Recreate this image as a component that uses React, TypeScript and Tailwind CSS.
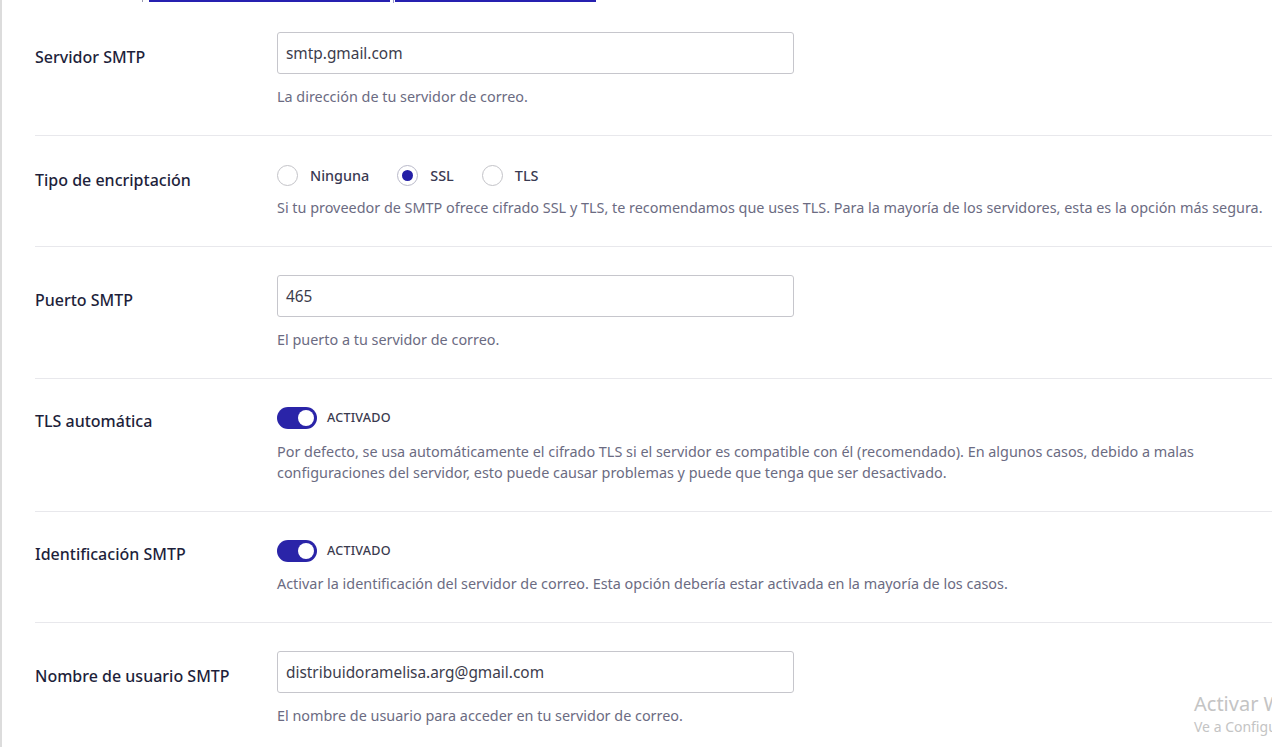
import React from "react";

type Row = {
    label: string;
    kind: "input" | "radio" | "toggle";
    value?: string;
    help: string[];
};

const rows: Row[] = [
    { label: "Servidor SMTP", kind: "input", value: "smtp.gmail.com", help: ["La dirección de tu servidor de correo."] },
    {
        label: "Tipo de encriptación",
        kind: "radio",
        help: [
            "Si tu proveedor de SMTP ofrece cifrado SSL y TLS, te recomendamos que uses TLS. Para la mayoría de los servidores, esta es la opción más segura.",
        ],
    },
    { label: "Puerto SMTP", kind: "input", value: "465", help: ["El puerto a tu servidor de correo."] },
    {
        label: "TLS automática",
        kind: "toggle",
        help: [
            "Por defecto, se usa automáticamente el cifrado TLS si el servidor es compatible con él (recomendado). En algunos casos, debido a malas",
            "configuraciones del servidor, esto puede causar problemas y puede que tenga que ser desactivado.",
        ],
    },
    {
        label: "Identificación SMTP",
        kind: "toggle",
        help: ["Activar la identificación del servidor de correo. Esta opción debería estar activada en la mayoría de los casos."],
    },
    {
        label: "Nombre de usuario SMTP",
        kind: "input",
        value: "distribuidoramelisa.arg@gmail.com",
        help: ["El nombre de usuario para acceder en tu servidor de correo."],
    },
];

function Radio({ label, checked }: { label: string; checked?: boolean }) {
    return (
        <label className="flex items-center gap-3">
            <span
                className={
                    "flex h-[21px] w-[21px] items-center justify-center rounded-full border bg-white " +
                    (checked ? "border-[#b9b9c9]" : "border-[#c3c3c8]")
                }
            >
                {checked && <span className="h-[11px] w-[11px] rounded-full bg-[#241fa6]" />}
            </span>
            <span className="text-[14.4px] font-medium text-[#3a3a52]">{label}</span>
        </label>
    );
}

function Toggle() {
    return (
        <div className="flex h-[22px] items-center gap-[10px]">
            <span className="flex h-[22px] w-[40px] items-center justify-end rounded-full bg-[#2a24a8] pr-[3px]">
                <span className="h-[16px] w-[16px] rounded-full bg-white" />
            </span>
            <span className="text-[12.6px] font-medium tracking-[0.2px] text-[#3a3a4e]">ACTIVADO</span>
        </div>
    );
}

function SettingRow({ row }: { row: Row }) {
    const labelTop = row.kind === "input" ? "mt-[13px]" : row.kind === "radio" ? "mt-[4px]" : "mt-[2px]";
    let helpTop = "mt-[12px]";
    if (row.kind === "radio") helpTop = "mt-[9px]";
    if (row.kind === "toggle" && row.help.length === 1) helpTop = "mt-[11px]";
    return (
        <div className="flex border-b border-[#e8e8ec] py-7">
            <div className={"w-[242px] shrink-0 text-[16px] font-medium leading-6 text-[#1e1f3b] " + labelTop}>
                {row.label}
            </div>
            <div className="flex min-w-0 flex-col">
                {row.kind === "input" && (
                    <div className="flex h-[42px] w-[517px] items-center rounded-[3px] border border-[#c6c6cc] bg-white px-2 pt-[1px] text-[15.4px] text-[#3c3c4c]">
                        {row.value}
                    </div>
                )}
                {row.kind === "radio" && (
                    <div className="flex h-6 items-center gap-[28px]">
                        <Radio label="Ninguna" />
                        <Radio label="SSL" checked />
                        <Radio label="TLS" />
                    </div>
                )}
                {row.kind === "toggle" && <Toggle />}
                <div className={helpTop + " whitespace-nowrap text-[14.4px] leading-[21px] text-[#6b6b82]"}>
                    {row.help.map((l) => (
                        <div key={l}>{l}</div>
                    ))}
                </div>
            </div>
        </div>
    );
}

export default function App() {
    return (
        <div
            className="relative h-[747px] w-[1272px] overflow-hidden bg-white"
            style={{ fontFamily: '"Noto Sans", "Open Sans", sans-serif' }}
        >
            <div className="flex h-full">
                <div className="w-[2px] shrink-0 bg-[#dcdcdc]" />
                <div className="flex-1 pl-[33px]">
                    <div className="flex h-[4px] items-start">
                        <span className="ml-[107px] h-[2px] w-[1px] bg-[#9a9ab0]" />
                        <span className="ml-[6px] h-[2px] w-[241px] bg-[#2620b0]" />
                        <span className="ml-[3px] h-[3px] w-[1px] bg-[#9a9ad0]" />
                        <span className="ml-[1px] h-[2px] w-[201px] bg-[#2620b0]" />
                    </div>
                    {rows.map((r) => (
                        <SettingRow key={r.label} row={r} />
                    ))}
                </div>
            </div>
            <div className="absolute left-[1194px] top-[690px] whitespace-nowrap text-[#c4c4c4]">
                <div className="text-[20px] leading-[27px]">Activar Windows</div>
                <div className="text-[14px] leading-[20px]">Ve a Configuración para activar Windows.</div>
            </div>
        </div>
    );
}
